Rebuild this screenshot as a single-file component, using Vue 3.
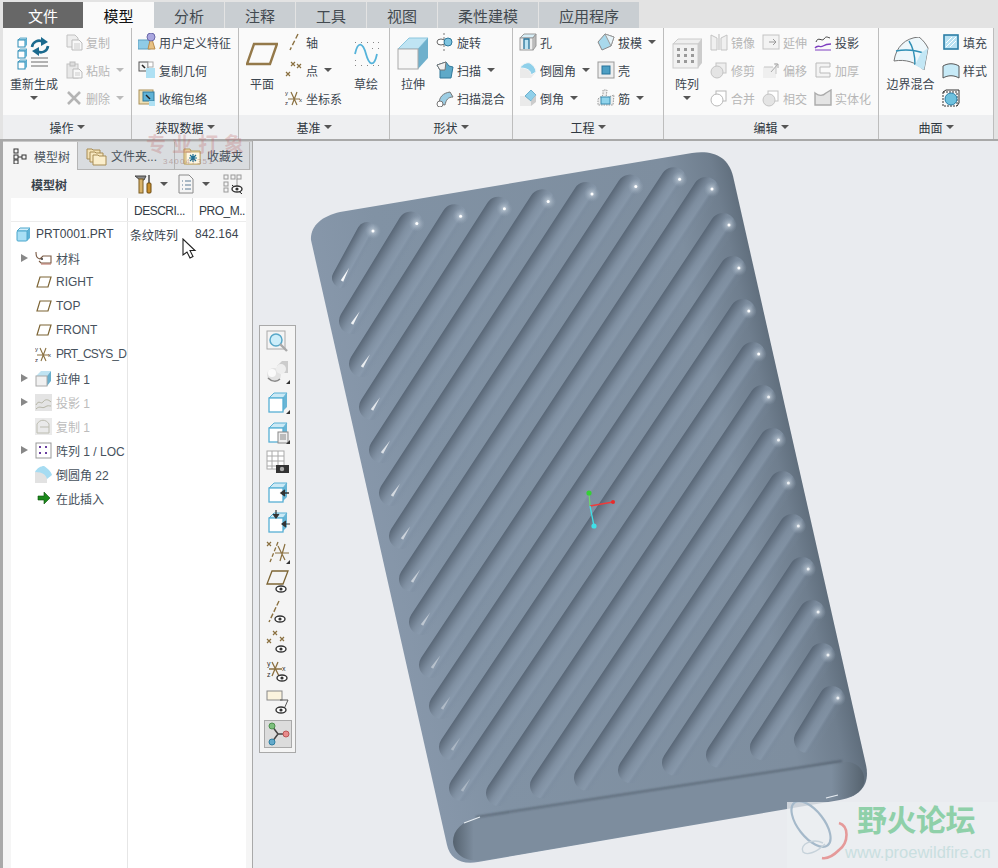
<script setup>
import { h } from 'vue'

// little shared pieces for the icons
const miniCube = (x, y) =>
  `<polygon points="${x},${y + 2} ${x + 2},${y} ${x + 9},${y} ${x + 7},${y + 2}" fill="#bfe3f2" stroke="#2d8cb5" stroke-width=".7"/><rect x="${x}" y="${y + 2}" width="7" height="7" fill="#fff" stroke="#2d8cb5"/><polygon points="${x + 7},${y + 2} ${x + 9},${y} ${x + 9},${y + 7} ${x + 7},${y + 9}" fill="#5fb0d2"/>`
const bigCube = `<polygon points="1,12 12,1 31,1 21,12" fill="#bfe4f3" stroke="#8cc6de"/><polygon points="21,12 31,1 31,21 21,32" fill="#6fb0cc"/><rect x="1" y="12" width="20" height="20" fill="#f6f6f6" stroke="#a9a9a9"/>`
const eye = (x, y) =>
  `<ellipse cx="${x}" cy="${y}" rx="5" ry="3" fill="#fff" stroke="#333" stroke-width="1.4"/><circle cx="${x}" cy="${y}" r="1.6" fill="#333"/>`
const xm = (x, y, c = '#8a7040') =>
  `<path d="M${x - 2} ${y - 2}l4 4m0-4l-4 4" stroke="${c}" stroke-width="1.2" fill="none"/>`
const tbCube = `<polygon points="3,8 8,3 21,3 17,8" fill="#cbe9f5" stroke="#58b0d5"/><polygon points="17,8 21,3 21,17 17,21" fill="#69b5d5"/><rect x="3" y="8" width="14" height="14" fill="#fff" stroke="#58b0d5" stroke-width="1.3"/>`
const corner = `<polygon points="24,20 24,24 20,24" fill="#333"/>`
const csys = c =>
  `<path d="M12 2L6 16M6 2l7 14M3 9h13" stroke="${c}" stroke-width="1.3" fill="none"/>`

const icons = {
  regen: [34, 34, miniCube(1, 1) + miniCube(1, 12) + miniCube(1, 23) +
    `<path d="M15 10a7 7 0 0 1 11-5" stroke="#1b6a8e" stroke-width="2.6" fill="none"/><polygon points="24,0 31,5 24,9" fill="#1b6a8e"/><path d="M31 9a7 7 0 0 1-11 5" stroke="#1b6a8e" stroke-width="2.6" fill="none"/><polygon points="22,10 15,14 22,19" fill="#1b6a8e"/><path d="M14 21h17M14 25h17M14 29h17" stroke="#9a9a9a" stroke-width="1.4"/>`],
  copy: [18, 18, `<path d="M2 2h8l3 3v9H2z" fill="#eee" stroke="#c2c2c2"/><path d="M7 7h7l3 3v7H7z" fill="#f8f8f8" stroke="#bbb"/><path d="M9 11h6M9 13h6M9 15h6" stroke="#ccc"/>`],
  paste: [18, 18, `<rect x="2" y="3" width="11" height="14" fill="#e8e8e8" stroke="#c2c2c2"/><rect x="5" y="1" width="5" height="4" fill="#ddd" stroke="#bbb"/><path d="M8 8h6l3 3v6H8z" fill="#f8f8f8" stroke="#bbb"/><path d="M10 12h5M10 14h5" stroke="#ccc"/>`],
  del: [18, 18, `<path d="M3 3l12 12M15 3L3 15" stroke="#b4b4b4" stroke-width="2.6"/>`],
  udf: [18, 18, `<rect x="0" y="7" width="12" height="9" fill="#8fcbe6" stroke="#5d9fc0"/><polygon points="10,16 13,3 17,16" fill="#e8c184" stroke="#b98c4c"/><circle cx="13" cy="4" r="4" fill="#a9a6df" stroke="#6a68a8"/>`],
  geom: [18, 18, `<rect x="1" y="1" width="9" height="9" fill="#f4f4f4" stroke="#555"/><path d="M4 4l3 3" stroke="#222" stroke-width="1.6"/><rect x="8" y="7" width="9" height="10" fill="#aee0f3"/><rect x="10" y="1" width="5" height="5" fill="#fff" stroke="#aaa"/>`],
  shrink: [18, 18, `<rect x="1" y="1" width="14" height="14" fill="#efe0b5" stroke="#a98f58"/><rect x="5" y="3" width="11" height="9" fill="#5fb2d6" stroke="#31799b"/><path d="M8 6l4 4" stroke="#222" stroke-width="1.4"/><rect x="11" y="12" width="6" height="5" fill="#aee0f3"/>`],
  plane: [32, 24, `<polygon points="8,2 31,2 24,22 1,22" fill="none" stroke="#94794a" stroke-width="2.4"/>`],
  axis: [18, 18, `<path d="M13 1L5 17" stroke="#8a7040" stroke-width="1.4" stroke-dasharray="5 2.5" fill="none"/>`],
  point: [18, 18, xm(8, 3) + xm(14, 5) + xm(3, 13)],
  csys: [18, 18, `<path d="M12 3L7 16M6 3l6 13M3 10h12" stroke="#8a7040" stroke-width="1.2" fill="none"/><text x="0" y="6" font-size="6" fill="#333">y</text><text x="0" y="16" font-size="6" fill="#333">z</text><text x="14" y="13" font-size="6" fill="#333">x</text>`],
  sketch: [28, 26, `<path d="M3 13c3-14 8-11 11 0s8 14 11 0" fill="none" stroke="#55b3da" stroke-width="1.8"/><g fill="#888"><rect x="3" y="1" width="1" height="1"/><rect x="9" y="1" width="1" height="1"/><rect x="15" y="1" width="1" height="1"/><rect x="21" y="1" width="1" height="1"/><rect x="26" y="1" width="1" height="1"/><rect x="26" y="7" width="1" height="1"/><rect x="20" y="7" width="1" height="1"/><rect x="3" y="19" width="1" height="1"/><rect x="3" y="24" width="1" height="1"/><rect x="9" y="24" width="1" height="1"/><rect x="15" y="24" width="1" height="1"/><rect x="21" y="24" width="1" height="1"/><rect x="26" y="24" width="1" height="1"/></g>`],
  extrude: [32, 33, bigCube],
  revolve: [18, 18, `<path d="M8 0v18" stroke="#777" stroke-dasharray="2 2"/><ellipse cx="5" cy="9" rx="4" ry="3" fill="#fff" stroke="#666"/><circle cx="12" cy="9" r="4" fill="#7ec4e0" stroke="#31799b"/>`],
  sweep: [18, 18, `<polygon points="1,4 10,1 13,5 17,6 15,17 4,17 4,9" fill="#5ea9c8" stroke="#31799b"/><polygon points="1,4 10,1 9,9 4,9" fill="#f2f2f2" stroke="#777"/>`],
  sweepblend: [18, 18, `<path d="M3 15c0-7 4-11 11-12l3 5c-5 0-7 3-8 8z" fill="#9ccde3" stroke="#777"/><circle cx="4" cy="15" r="3" fill="#fff" stroke="#777"/>`],
  hole: [18, 18, `<polygon points="1,5 5,1 17,1 14,5" fill="#d7eef7" stroke="#999"/><rect x="1" y="5" width="13" height="12" fill="#eee" stroke="#999"/><path d="M14 5l3-4v12l-3 4" fill="#bbb" stroke="#999"/><path d="M5 16V6h5v10" fill="#bfe4f3" stroke="#27739a" stroke-width="1.3"/>`],
  round: [18, 18, `<path d="M1 7h8c1-3 2-5 2-5s5 3 6 9l-5 6H1z" fill="#eaeaea"/><path d="M1 7c2-4 7-6 10-5 3 2 6 5 6 9l-5 3c0-4-3-7-11-7z" fill="#8fd0ea" stroke="#f6f6f6"/>`],
  chamfer: [18, 18, `<rect x="1" y="7" width="11" height="10" fill="#eaeaea"/><polygon points="12,1 17,6 12,12 6,7" fill="#8fd0ea" stroke="#6fb0cc"/><polygon points="12,12 17,6 17,13 12,17" fill="#ccc"/>`],
  draft: [18, 18, `<polygon points="1,9 8,1 17,4 14,13 5,17" fill="#a9d9ec" stroke="#888"/><polygon points="8,1 14,13 17,4" fill="#e6f3f8" stroke="#999"/>`],
  shell: [18, 18, `<rect x="1" y="1" width="16" height="16" fill="#eee" stroke="#999"/><rect x="5" y="5" width="8" height="8" fill="#4d9fc4" stroke="#27739a"/>`],
  rib: [18, 18, `<path d="M1 10l5-4v-5l4 0-1 8 8-3-1 10H1z" fill="#eee" stroke="#999" stroke-dasharray="1.5 1"/><rect x="4" y="8" width="9" height="7" fill="#90d4ec" stroke="#3a8cb0"/>`],
  pattern: [30, 31, `<polygon points="1,6 6,1 30,1 26,6" fill="#eee" stroke="#ccc"/><polygon points="26,6 30,1 30,25 26,30" fill="#ccc"/><rect x="1" y="6" width="25" height="24" fill="#f1f1f1" stroke="#ccc"/><g fill="#9a9a9a"><rect x="5" y="10" width="3" height="3"/><rect x="12" y="10" width="3" height="3"/><rect x="19" y="10" width="3" height="3"/><rect x="5" y="16" width="3" height="3"/><rect x="12" y="16" width="3" height="3"/><rect x="19" y="16" width="3" height="3"/><rect x="5" y="22" width="3" height="3"/><rect x="12" y="22" width="3" height="3"/><rect x="19" y="22" width="3" height="3"/></g>`],
  mirror: [18, 18, `<path d="M1 2l6 3v12H1zM17 2l-6 3v12h6z" fill="#f0f0f0" stroke="#c4c4c4"/><path d="M9 1v16" stroke="#bbb"/>`],
  trim: [18, 18, `<rect x="6" y="2" width="10" height="10" fill="#eee" stroke="#c4c4c4"/><circle cx="7" cy="11" r="6" fill="#e4e4e4" stroke="#c4c4c4"/>`],
  merge: [18, 18, `<rect x="6" y="2" width="10" height="10" fill="#fff" stroke="#b8b8b8"/><circle cx="7" cy="11" r="6" fill="#fff" stroke="#b8b8b8"/>`],
  extend: [18, 18, `<rect x="1" y="2" width="16" height="14" fill="#f3f3f3" stroke="#c4c4c4"/><path d="M7 9h7M11 6l3 3-3 3" stroke="#999" fill="none"/>`],
  offset: [18, 18, `<rect x="1" y="6" width="13" height="11" fill="#efefef"/><path d="M2 6h9M14 2v11" stroke="#c4c4c4"/><path d="M9 11l7-8M12 3h4v4" stroke="#aaa" fill="none"/>`],
  intersect: [18, 18, `<rect x="6" y="2" width="10" height="10" fill="#fff" stroke="#c4c4c4"/><circle cx="7" cy="11" r="6" fill="#e4e4e4" stroke="#c4c4c4"/>`],
  project: [18, 18, `<path d="M2 9c2-6 6 0 8-3s3-2 6-1" fill="none" stroke="#444"/><path d="M1 15c3-4 5 0 8-2s4-2 8-2" fill="none" stroke="#7e3ec0" stroke-width="1.3"/><path d="M1 17h16" stroke="#7e3ec0"/>`],
  thicken: [18, 18, `<path d="M2 2h14v4H6v6h10v4H2z" fill="#f3f3f3" stroke="#bbb"/>`],
  solidify: [18, 18, `<path d="M1 4c4 3 8 3 11 0l5-3v15H1z" fill="#e4e4e4" stroke="#aaa" stroke-width="1.4"/>`],
  boundary: [36, 33, `<path d="M1 24C3 10 12 1 26 0c4 3 7 7 9 11l-4 22c-9-8-18-11-30-9z" fill="#eef7fb" stroke="#777"/><path d="M16 4c4 6 6 14 6 24M3 14c10-2 20-1 30 3" stroke="#2e8fb5" stroke-width="1.4" fill="none"/><path d="M22 28l9 5 4-22-7 5z" fill="#c3e7f5"/>`],
  fill: [18, 18, `<rect x="2" y="2" width="14" height="14" fill="#b9e2f3" stroke="#2b7ea6" stroke-width="1.6"/><path d="M4 14l10-10M8 14l6-6M4 10l6-6" stroke="#fff"/>`],
  style: [18, 18, `<path d="M1 5c5-3 11-3 16 0v12c-5-3-11-3-16 0z" fill="#c7eaf7" stroke="#555"/>`],
  freestyle: [18, 18, `<rect x="1" y="3" width="14" height="14" fill="none" stroke="#333" stroke-dasharray="2 1"/><path d="M1 3l3-2h13v13l-2 3" fill="none" stroke="#333"/><circle cx="9" cy="10" r="6" fill="#6ec1de" stroke="#2b7ea6"/>`],
  tree: [16, 16, `<rect x="1" y="1" width="4" height="4" fill="none" stroke="#333"/><rect x="1" y="7" width="4" height="4" fill="none" stroke="#333"/><rect x="1" y="12" width="4" height="4" fill="none" stroke="#333"/><rect x="9" y="7" width="4" height="4" fill="none" stroke="#333"/><path d="M5 9h4" stroke="#333"/>`],
  folders: [22, 20, `<path d="M1 3h5l1 1h7v9H1z" fill="#f3e1b3" stroke="#a78c55"/><path d="M4 6h5l1 1h7v9H4z" fill="#f7e7bf" stroke="#a78c55"/><path d="M7 9h5l1 1h7v9H7z" fill="#fbeecb" stroke="#a78c55"/>`],
  fav: [18, 18, `<path d="M1 2h6l1 2h9v13H1z" fill="#f5dfa6" stroke="#b49a5c"/><rect x="3" y="5" width="14" height="12" fill="#fff8e4" stroke="#c9b37c"/><path d="M10 7v8M6 11h8M7 8l6 6m0-6l-6 6" stroke="#1f6f94" stroke-width="1.2"/>`],
  tools: [19, 20, `<path d="M1 2h11l-2 4H6z" fill="#888" stroke="#444"/><rect x="5" y="5" width="4" height="14" fill="#d9b36a" stroke="#7b5c22"/><rect x="14" y="1" width="2" height="8" fill="#777"/><rect x="13" y="9" width="4" height="10" rx="1" fill="#c98f2c" stroke="#6d4a10"/>`],
  list: [16, 20, `<path d="M1 1h10l4 4v14H1z" fill="#f5f5f5" stroke="#8a8a8a"/><path d="M4 7h1M7 7h6M4 11h1M7 11h6M4 15h1M7 15h6" stroke="#5a7a94"/>`],
  treeEye: [20, 20, `<g fill="none" stroke="#999"><rect x="1" y="1" width="4" height="4"/><rect x="1" y="8" width="4" height="4"/><rect x="1" y="14" width="4" height="4"/><rect x="8" y="1" width="4" height="4"/><rect x="14" y="1" width="4" height="4"/><path d="M14 5v8"/></g><path d="M9 11l10 9" stroke="#222"/>` + eye(14, 15)],
  material: [17, 14, `<path d="M1 1c0 5 1 6 4 7l3-3h8v7H6l-2-2" fill="none" stroke="#7a5a44" stroke-width="1.1"/><circle cx="7" cy="8" r="1" fill="#333"/><path d="M6 13h10" stroke="#b56a5c"/>`],
  planeSm: [16, 12, `<polygon points="4,1 15,1 12,11 1,11" fill="none" stroke="#7d6535" stroke-width="1.2"/>`],
  csysSm: [17, 17, `<path d="M11 2L6 15M5 2l6 13M2 9h12" stroke="#8a7040" stroke-width="1.1" fill="none"/><text x="0" y="5" font-size="6" fill="#333">y</text><text x="0" y="16" font-size="6" fill="#333">z</text><text x="13" y="11" font-size="6" fill="#333">x</text>`],
  solid: [17, 17, `<polygon points="1,6 6,1 16,1 12,6" fill="#bfe3f2"/><polygon points="12,6 16,1 16,11 12,16" fill="#6aafcc"/><rect x="1" y="6" width="11" height="10" fill="#f1f1f1" stroke="#aaa"/>`],
  solidRoot: [15, 15, `<polygon points="1,4 4,1 14,1 11,4" fill="#d5effa" stroke="#4aa6cc"/><polygon points="11,4 14,1 14,11 11,14" fill="#5fb2d6"/><rect x="1" y="4" width="10" height="10" rx="1" fill="#a9dff5" stroke="#4aa6cc"/>`],
  ghostProject: [17, 17, `<rect x="0" y="0" width="17" height="17" fill="#e4e4e4"/><path d="M1 11c3-6 5 0 7-3s5-3 8 0M1 15c4-4 6 0 9-2s4-1 6-1" fill="none" stroke="#b5b5a5"/>`],
  ghostCopy: [17, 17, `<rect x="0" y="0" width="17" height="17" fill="#eaeaea"/><path d="M2 15V6c3-5 9-5 12 0v9zM5 9h9" fill="none" stroke="#bcbcb0"/>`],
  patternSm: [17, 17, `<rect x="1" y="1" width="15" height="15" fill="#fff" stroke="#999"/><g fill="#6a3fa0"><rect x="4" y="4" width="2" height="2"/><rect x="10" y="4" width="2" height="2"/><rect x="4" y="10" width="2" height="2"/><rect x="10" y="10" width="2" height="2"/></g>`],
  roundSm: [17, 17, `<rect x="0" y="6" width="12" height="11" fill="#e2e2e2"/><path d="M0 6c2-4 6-6 9-6 3 2 7 5 8 9l-5 4c-1-4-4-7-12-7z" fill="#a6dcf2"/>`],
  insert: [14, 12, `<polygon points="1,4 7,4 7,0 13,6 7,12 7,8 1,8" fill="#1c8a1c" stroke="#0b4f0b" stroke-width=".6"/>`],
  // floating toolbar
  tZoom: [24, 24, `<rect x="1" y="1" width="18" height="18" fill="#f4f4f4" stroke="#aaa"/><circle cx="10" cy="10" r="6" fill="#cdeefa" stroke="#58a8c9" stroke-width="1.5"/><path d="M14 14l7 7" stroke="#aaa" stroke-width="2.4"/>`],
  tShade: [24, 24, `<polygon points="11,6 16,1 22,1 22,13 16,13" fill="#ccc"/><circle cx="8" cy="15" r="7" fill="#e2e2e2"/><circle cx="6" cy="13" r="4" fill="#fafafa"/><circle cx="15" cy="9" r="5" fill="#eee"/><path d="M2 18c4 4 9 4 12 1" stroke="#888" stroke-width="1.5" fill="none"/>` + corner],
  tCube: [24, 24, tbCube + corner],
  tCubeList: [24, 24, tbCube + `<rect x="12" y="12" width="10" height="11" fill="#eee" stroke="#888"/><path d="M14 15h6M14 17h6M14 19h6" stroke="#888"/>` + corner],
  tCamera: [24, 24, `<rect x="1" y="1" width="17" height="18" fill="#fff" stroke="#aaa"/><path d="M1 6h17M1 11h17M1 16h17M6 1v18M12 1v18" stroke="#aaa"/><rect x="10" y="15" width="13" height="8" fill="#333"/><circle cx="16" cy="19" r="2.2" fill="#aaa"/>`],
  tCubeL: [24, 24, tbCube + `<path d="M23 13h-7M19 10l-4 3 4 3" stroke="#333" stroke-width="1.5" fill="#333"/>`],
  tCubeTL: [24, 24, tbCube + `<path d="M10 0v6M7 4l3 4 3-4" stroke="#333" stroke-width="1.2" fill="#333"/><path d="M24 14h-6M20 11l-4 3 4 3" stroke="#333" stroke-width="1.2" fill="#333"/>`],
  tDatum: [24, 24, xm(3, 4) + `<path d="M12 2L4 22" stroke="#8a7040" stroke-width="1.3" stroke-dasharray="4 2"/><path d="M19 4l-5 17M12 6l7 14M9 13h14" stroke="#8a7040" stroke-width="1.2" fill="none"/>` + corner],
  tPlane: [24, 24, `<polygon points="6,1 22,1 17,14 1,14" fill="none" stroke="#7d6535" stroke-width="1.3"/>` + eye(15, 19)],
  tAxis: [24, 24, `<path d="M13 1L3 22" stroke="#8a7040" stroke-width="1.4" stroke-dasharray="5 2"/>` + eye(14, 19)],
  tPoint: [24, 24, xm(9, 3) + xm(16, 9) + xm(3, 11) + eye(15, 19)],
  tCsys: [24, 24, csys('#8a7040') + `<text x="1" y="6" font-size="7" fill="#333">y</text><text x="1" y="17" font-size="7" fill="#333">z</text><text x="16" y="11" font-size="7" fill="#333">x</text>` + eye(16, 18)],
  tNote: [24, 24, `<rect x="1" y="1" width="15" height="9" fill="#fbf3de" stroke="#888"/><path d="M14 10h8l-4 9" fill="none" stroke="#555"/>` + eye(15, 20)],
  tTriad: [24, 24, `<path d="M12 12L6 4M12 12L6 20M12 12h8" stroke="#444" stroke-width="1.5"/><circle cx="6" cy="4" r="3" fill="#7cbf7c" stroke="#4d8f4d"/><circle cx="6" cy="20" r="3" fill="#64aacb" stroke="#2e7ea1"/><circle cx="20" cy="12" r="3" fill="#e88b8b" stroke="#bb5555"/>`],
}

// renders one of the icons above
const Icon = props => {
  const [w, h2, svg] = icons[props.name]
  return h('svg', { width: w, height: h2, viewBox: `0 0 ${w} ${h2}`, innerHTML: svg })
}

const tabs = ['分析', '注释', '工具', '视图', '柔性建模', '应用程序']

const it = (icon, text, extra = {}) => ({ icon, text, ...extra })
const off = { dis: true }

const groups = [
  { label: '操作', w: 129, cols: [
    { large: true, w: 62, icon: 'regen', text: '重新生成', caret: true },
    { w: 65, items: [it('copy', '复制', off), it('paste', '粘贴', { dis: true, caret: true }), it('del', '删除', { dis: true, caret: true })] },
  ] },
  { label: '获取数据', w: 107, pad: 6, cols: [
    { w: 95, items: [it('udf', '用户定义特征'), it('geom', '复制几何'), it('shrink', '收缩包络')] },
  ] },
  { label: '基准', w: 151, cols: [
    { large: true, w: 46, icon: 'plane', text: '平面' },
    { w: 62, items: [it('axis', '轴'), it('point', '点', { caret: true }), it('csys', '坐标系')] },
    { large: true, w: 38, icon: 'sketch', text: '草绘' },
  ] },
  { label: '形状', w: 123, cols: [
    { large: true, w: 46, icon: 'extrude', text: '拉伸' },
    { w: 74, items: [it('revolve', '旋转'), it('sweep', '扫描', { caret: true }), it('sweepblend', '扫描混合')] },
  ] },
  { label: '工程', w: 151, pad: 6, cols: [
    { w: 78, items: [it('hole', '孔'), it('round', '倒圆角', { caret: true }), it('chamfer', '倒角', { caret: true })] },
    { w: 64, items: [it('draft', '拔模', { caret: true }), it('shell', '壳'), it('rib', '筋', { caret: true })] },
  ] },
  { label: '编辑', w: 215, cols: [
    { large: true, w: 46, icon: 'pattern', text: '阵列', caret: true },
    { w: 52, items: [it('mirror', '镜像', off), it('trim', '修剪', off), it('merge', '合并', off)] },
    { w: 52, items: [it('extend', '延伸', off), it('offset', '偏移', off), it('intersect', '相交', off)] },
    { w: 60, items: [it('project', '投影'), it('thicken', '加厚', off), it('solidify', '实体化', off)] },
  ] },
  { label: '曲面', w: 115, cols: [
    { large: true, w: 63, icon: 'boundary', text: '边界混合' },
    { w: 48, items: [it('fill', '填充'), it('style', '样式'), it('freestyle', '')] },
  ] },
]

const treeRows = [
  { icon: 'material', text: '材料', arrow: true },
  { icon: 'planeSm', text: 'RIGHT' },
  { icon: 'planeSm', text: 'TOP' },
  { icon: 'planeSm', text: 'FRONT' },
  { icon: 'csysSm', text: 'PRT_CSYS_D', tight: true },
  { icon: 'solid', text: '拉伸 1', arrow: true },
  { icon: 'ghostProject', text: '投影 1', arrow: true, dis: true },
  { icon: 'ghostCopy', text: '复制 1', dis: true },
  { icon: 'patternSm', text: '阵列 1 / LOC', arrow: true },
  { icon: 'roundSm', text: '倒圆角 22' },
  { icon: 'insert', text: '在此插入' },
]

const toolbar = ['tZoom', 'tShade', 'tCube', 'tCubeList', 'tCamera', 'tCubeL', 'tCubeTL', 'tDatum', 'tPlane', 'tAxis', 'tPoint', 'tCsys', 'tNote']

// the ribs: 13 start on the left edge, 8 on the bottom; 8 end on the top edge, 13 on the right
const lowers = []
for (let k = 0; k < 13; k++) lowers.push([342 + 10 * k, 278 + 43 * k - (k > 9 ? (k - 9) * 2 : 0)])
for (let k = 0; k < 8; k++) lowers.push([499 + 44 * k, 793 - 7.6 * k])
const uppers = []
for (let k = 0; k < 8; k++) uppers.push([373 + 43.8 * k, 231 - 7.4 * k])
uppers.push([712, 189])
for (let k = 0; k < 12; k++) uppers.push([729 + 9.9 * k, 225 + 43 * k])

const ribs = lowers.map(([x1, y1], i) => {
  const [ux, uy] = uppers[i]
  const x2 = ux - 6
  const y2 = uy + 1
  const len = Math.hypot(x2 - x1, y2 - y1)
  const dx = (x2 - x1) / len
  const dy = (y2 - y1) / len
  const r = i === 0 ? 10 : 13
  // tapered highlight near the lower end, only on the left side ones
  const sx = x1
  const sy = y1 + 3
  const streak = i < 13
    ? `${sx - 1.2},${sy - 0.8} ${sx + 1.2},${sy + 0.8} ${sx + dx * 15},${sy + dy * 15}`
    : null
  return {
    id: i,
    dot: [ux, uy],
    // rib drawn as a rounded bar, rotated about its lower end
    tf: `translate(${x1} ${y1}) rotate(${(Math.atan2(dy, dx) * 180) / Math.PI})`,
    len: len + 2 * r,
    r,
    streak,
    op: i < 13 ? Math.max(0.3, 0.95 - i * 0.06) : 0,
    dim: i > 12 ? 0.75 : 1,
  }
})
</script>

<template>
  <div class="app">
    <!-- Ribbon -->
    <header class="ribbon">
      <nav class="tabs">
        <span class="tab tab-file">文件</span>
        <span class="tab tab-active">模型</span>
        <span v-for="t in tabs" :key="t" class="tab" :class="{ wide: t.length > 2 }">{{ t }}</span>
      </nav>
      <div class="groups">
        <section v-for="g in groups" :key="g.label" class="group" :style="{ width: g.w + 'px' }">
          <div class="group-body" :style="{ paddingLeft: (g.pad || 0) + 'px' }">
            <template v-for="(c, i) in g.cols" :key="i">
              <div v-if="c.large" class="large" :style="{ width: c.w + 'px' }">
                <div class="large-icon"><Icon :name="c.icon" /></div>
                <span class="large-text">{{ c.text }}</span>
                <i v-if="c.caret" class="caret" />
              </div>
              <div v-else class="col" :style="{ width: c.w + 'px' }">
                <div v-for="item in c.items" :key="item.icon" class="small" :class="{ dis: item.dis }">
                  <span class="small-icon"><Icon :name="item.icon" /></span>
                  <span v-if="item.text">{{ item.text }}</span>
                  <i v-if="item.caret" class="caret small-caret" />
                </div>
              </div>
            </template>
          </div>
          <footer class="group-foot">{{ g.label }}<i class="caret foot-caret" /></footer>
        </section>
      </div>
    </header>

    <div class="main">
      <!-- Model tree panel -->
      <aside class="panel">
        <div class="panel-tabs">
          <div class="ptab ptab-on"><Icon name="tree" /><span>模型树</span></div>
          <div class="ptab ptab-folder"><Icon name="folders" /><span>文件夹...</span></div>
          <div class="ptab ptab-fav"><Icon name="fav" /><span>收藏夹</span></div>
        </div>
        <div class="panel-tools">
          <b class="tools-title">模型树</b>
          <span class="tool-hammer"><Icon name="tools" /></span><i class="caret tool-caret" />
          <span class="tool-list"><Icon name="list" /></span><i class="caret tool-caret" />
          <span class="tool-eye"><Icon name="treeEye" /></span>
        </div>
        <div class="table">
          <div class="thead">
            <div class="c-tree" />
            <div class="c-desc">DESCRI...</div>
            <div class="c-pro">PRO_M..</div>
          </div>
          <div class="tbody">
            <div class="tree-col">
              <div class="row root"><Icon name="solidRoot" /><span>PRT0001.PRT</span></div>
              <div v-for="r in treeRows" :key="r.text" class="row" :class="{ dis: r.dis }">
                <i class="arrow" :class="{ hidden: !r.arrow }" />
                <span class="row-icon"><Icon :name="r.icon" /></span>
                <span class="row-text" :class="{ tight: r.tight }">{{ r.text }}</span>
              </div>
            </div>
            <div class="data-col">
              <div class="data-row">
                <span class="d-desc">条纹阵列</span>
                <span class="d-pro">842.164</span>
              </div>
            </div>
          </div>
        </div>
      </aside>

      <!-- Graphics area -->
      <main class="canvas">
        <svg class="part" width="745" height="727" viewBox="253 141 745 727">
          <defs>
            <linearGradient id="bodyFill" gradientUnits="userSpaceOnUse" x1="320" y1="400" x2="770" y2="300">
              <stop offset="0" stop-color="#75859a" />
              <stop offset=".05" stop-color="#8797aa" />
              <stop offset=".2" stop-color="#8192a4" />
              <stop offset=".84" stop-color="#7e8e9f" />
              <stop offset=".94" stop-color="#6f7e8e" />
              <stop offset="1" stop-color="#5a6876" />
            </linearGradient>
            <linearGradient id="ribFill" x1="0" y1="0" x2="0" y2="1">
              <stop offset="0" stop-color="#566474" stop-opacity=".95" />
              <stop offset=".1" stop-color="#5f6d7d" stop-opacity=".9" />
              <stop offset=".4" stop-color="#7d8d9f" stop-opacity=".85" />
              <stop offset=".66" stop-color="#8c9db0" stop-opacity=".55" />
              <stop offset=".78" stop-color="#74859a" stop-opacity=".2" />
              <stop offset="1" stop-color="#8293a5" stop-opacity="0" />
            </linearGradient>
            <linearGradient id="slotFill" x1="0" y1="0" x2="1" y2="0">
              <stop offset="0" stop-color="#55626f" />
              <stop offset=".05" stop-color="#7d8d9e" />
              <stop offset=".92" stop-color="#7d8d9e" />
              <stop offset="1" stop-color="#56636f" />
            </linearGradient>
            <radialGradient id="halo">
              <stop offset="0" stop-color="#dde6ee" stop-opacity=".7" />
              <stop offset="1" stop-color="#9fb0c2" stop-opacity="0" />
            </radialGradient>
            <filter id="soft"><feGaussianBlur stdDeviation=".5" /></filter>
            <filter id="soft2"><feGaussianBlur stdDeviation=".8" /></filter>
          </defs>

          <path class="body" d="M311 240C310 226 322 216 340 212L692 153C714 150 728 157 733 176L866 765C870 783 862 796 840 800L478 862C460 865 450 858 447 845Z" fill="url(#bodyFill)" />

          <g v-for="r in ribs" :key="r.id">
            <rect :transform="r.tf" :x="-r.r" :y="-r.r" :width="r.len" :height="r.r * 2" :rx="r.r" fill="url(#ribFill)" />
            <circle :cx="r.dot[0]" :cy="r.dot[1]" r="8" fill="url(#halo)" />
            <circle :cx="r.dot[0]" :cy="r.dot[1]" r="1.5" fill="#fff" :opacity="r.dim" />
            <polygon v-if="r.streak" :points="r.streak" fill="#fff" :opacity="r.op" filter="url(#soft)" />
          </g>

          <!-- end face of the part -->
          <path d="M478 818L842 762C858 760 866 772 864 783C862 793 852 797 840 799L486 860C468 863 454 856 453 842C453 830 462 821 478 818Z" fill="url(#slotFill)" />
          <path d="M476 817L842 761" stroke="#4f5c69" stroke-width="1.6" fill="none" filter="url(#soft2)" />
          <path d="M464 823L480 817M826 798L838 795" stroke="#e8eef3" stroke-width="1.2" fill="none" filter="url(#soft)" />

          <!-- coordinate triad -->
          <line x1="590" y1="506" x2="589" y2="493" stroke="#6fd36f" stroke-width="1.3" />
          <line x1="590" y1="506" x2="613" y2="502" stroke="#f03a3a" stroke-width="1.3" />
          <line x1="590" y1="506" x2="594" y2="526" stroke="#3fe0e8" stroke-width="1.3" />
          <circle cx="589" cy="493" r="2.6" fill="#35d035" />
          <circle cx="613" cy="502" r="2" fill="#e82a2a" />
          <circle cx="594" cy="526" r="2.6" fill="#3fe0e8" />
        </svg>

        <div class="float-bar">
          <span v-for="t in toolbar" :key="t" class="float-btn"><Icon :name="t" /></span>
          <span class="float-btn float-on"><Icon name="tTriad" /></span>
        </div>

        <!-- forum watermark -->
        <div class="forum">
          <svg class="forum-logo" width="66" height="66" viewBox="0 0 66 66">
            <ellipse cx="22" cy="22" rx="13" ry="27" transform="rotate(-38 22 22)" fill="none" stroke="#a5b9ca" stroke-width="2.2" />
            <path d="M50 21C60 24 60 40 50 48C44 54 38 57 33 56" fill="none" stroke="#e59a9a" stroke-width="2.6" />
            <path d="M34 41C24 36 10 42 14 50C18 54 28 50 36 42" fill="none" stroke="#c6d2da" stroke-width="1.4" />
          </svg>
          <div class="forum-name">野火论坛</div>
          <div class="forum-url">www.proewildfire.cn</div>
        </div>
      </main>
    </div>

    <!-- overlays on top of the window -->
    <div class="stamp">专业打象<small>340047351</small></div>
    <svg class="cursor" width="15" height="21" viewBox="0 0 15 21">
      <path d="M1 1v16l4-3 3 6 3-1.5-3-6h5z" fill="#fff" stroke="#222" stroke-width="1.1" />
    </svg>
  </div>
</template>

<style scoped>
.app {
  position: relative;
  width: 998px;
  height: 868px;
  overflow: hidden;
  display: flex;
  flex-direction: column;
  background: #e9ebef;
  font-family: "Liberation Sans", "Noto Sans CJK SC", sans-serif;
  font-size: 12px;
  color: #3c4650;
}

/* ── Ribbon ─────────────────────────────────────── */
.ribbon {
  flex-shrink: 0;
  height: 141px;
  background: #e3e3e3;
  border-bottom: 2px solid #a8a8a8;
  box-sizing: border-box;
}
.tabs {
  display: flex;
  height: 28px;
  padding: 2px 0 0 3px;
  box-sizing: border-box;
  gap: 1px;
}
.tab {
  width: 70px;
  display: flex;
  align-items: center;
  justify-content: center;
  background: #c9ced2;
  font-size: 15px;
  color: #434a50;
}
.tab.wide { width: 100px; }
.tab-file {
  width: 80px;
  margin-right: -1px;
  background: #676767;
  color: #fff;
}
.tab-active {
  width: 71px;
  margin-right: -1px;
  background: #fafafa;
  color: #111;
}

.groups {
  display: flex;
  height: 111px;
  padding-left: 3px;
}
.group {
  box-sizing: border-box;
  display: flex;
  flex-direction: column;
  background: #fafafa;
  border-right: 1px solid #bdbdbd;
  flex-shrink: 0;
}
.group-body {
  flex: 1;
  display: flex;
}
.group-foot {
  height: 24px;
  background: #eeeff1;
  display: flex;
  align-items: center;
  justify-content: center;
  color: #2e3740;
}
.large {
  flex-shrink: 0;
  display: flex;
  flex-direction: column;
  align-items: center;
}
.large-icon {
  height: 49px;
  display: flex;
  align-items: center;
  justify-content: center;
  padding-top: 2px;
  box-sizing: border-box;
}
.large-text {
  line-height: 17px;
  white-space: nowrap;
}
.col { flex-shrink: 0; }
.small {
  height: 28px;
  display: flex;
  align-items: center;
  white-space: nowrap;
}
.small.dis { color: #b6b6b6; }
.small-icon {
  width: 18px;
  height: 18px;
  margin-right: 3px;
  flex-shrink: 0;
  display: flex;
}
.caret {
  display: inline-block;
  width: 0;
  height: 0;
  border-left: 4px solid transparent;
  border-right: 4px solid transparent;
  border-top: 4px solid #555;
}
.large .caret { margin-top: 2px; }
.small-caret { margin-left: 6px; }
.small.dis .caret { border-top-color: #bbb; }
.foot-caret { margin-left: 3px; }

/* ── Main area ──────────────────────────────────── */
.main {
  flex: 1;
  display: flex;
  min-height: 0;
}
.panel {
  width: 253px;
  flex-shrink: 0;
  box-sizing: border-box;
  display: flex;
  flex-direction: column;
  background: #f5f5f5;
  border-left: 3px solid #a9a9a9;
  border-right: 1px solid #a9a9a9;
}
.panel-tabs {
  display: flex;
  height: 29px;
  background: #d9dcdf;
  border-top: 1px solid #c8c8c8;
  box-sizing: border-box;
}
.ptab {
  display: flex;
  align-items: center;
  box-sizing: border-box;
  border-bottom: 1px solid #b5b5b5;
  border-right: 1px solid #b5b5b5;
  color: #4a535c;
  white-space: nowrap;
}
.ptab-on {
  width: 75px;
  padding-left: 10px;
  gap: 5px;
  background: #f5f5f5;
  border-bottom: 0;
}
.ptab-folder {
  width: 97px;
  padding-left: 8px;
  gap: 3px;
}
.ptab-fav {
  width: 75px;
  padding-left: 8px;
  gap: 6px;
}
.panel-tools {
  height: 28px;
  display: flex;
  align-items: center;
  padding-left: 28px;
}
.tools-title {
  width: 103px;
  color: #39424b;
}
.tool-hammer, .tool-list, .tool-eye { display: flex; }
.tool-caret { margin-left: 7px; }
.tool-list { margin-left: 10px; }
.tool-list + .tool-caret { margin-left: 8px; }
.tool-eye { margin-left: 13px; }

.table {
  flex: 1;
  min-height: 0;
  margin: 0 6px 0 8px;
  background: #fff;
  display: flex;
  flex-direction: column;
}
.thead {
  display: flex;
  height: 24px;
  flex-shrink: 0;
  border-bottom: 1px solid #ececec;
  color: #333d46;
  box-sizing: border-box;
  letter-spacing: -0.5px;
}
.c-tree {
  width: 116px;
  border-right: 1px solid #ddd;
  flex-shrink: 0;
}
.c-desc {
  width: 65px;
  padding-left: 6px;
  box-sizing: border-box;
  border-right: 1px solid #ddd;
  line-height: 27px;
  flex-shrink: 0;
  white-space: nowrap;
}
.c-pro {
  padding-left: 6px;
  line-height: 27px;
  white-space: nowrap;
}
.tbody {
  flex: 1;
  display: flex;
  min-height: 0;
}
.tree-col {
  width: 116px;
  flex-shrink: 0;
  border-right: 1px solid #e6e6e6;
  overflow: hidden;
}
.row {
  height: 24px;
  display: flex;
  align-items: center;
  white-space: nowrap;
  color: #47525d;
}
.row.dis { color: #bcbcbc; }
.root {
  padding-left: 5px;
  gap: 5px;
  color: #3c4650;
}
.arrow {
  width: 0;
  height: 0;
  margin-left: 10px;
  border-top: 4.5px solid transparent;
  border-bottom: 4.5px solid transparent;
  border-left: 7px solid #888;
  flex-shrink: 0;
}
.arrow.hidden { visibility: hidden; }
.row-icon {
  width: 17px;
  margin-left: 7px;
  flex-shrink: 0;
  display: flex;
  justify-content: center;
  align-items: center;
}
.row-text { margin-left: 4px; }
.row-text.tight { letter-spacing: -0.85px; }
.data-col { flex: 1; min-width: 0; }
.data-row {
  height: 24px;
  display: flex;
  align-items: center;
  white-space: nowrap;
}
.d-desc { width: 66px; padding-left: 2px; box-sizing: border-box; }
.d-pro { padding-left: 1px; }

/* ── Graphics area ──────────────────────────────── */
.canvas {
  position: relative;
  flex: 1;
  min-width: 0;
  background: #e9ebef;
}
.part {
  position: absolute;
  inset: 0;
}
.float-bar {
  position: absolute;
  left: 6px;
  top: 184px;
  width: 37px;
  height: 428px;
  box-sizing: border-box;
  padding: 4px 0;
  display: flex;
  flex-direction: column;
  align-items: center;
  justify-content: space-between;
  background: #f4f4f4;
  border: 1px solid #a9a9a9;
}
.float-btn {
  display: flex;
  width: 24px;
  height: 24px;
}
.float-on {
  width: 26px;
  height: 26px;
  align-items: center;
  justify-content: center;
  background: #dcdcdc;
  border: 1px solid #a9a9a9;
}
.forum {
  position: absolute;
  right: 0;
  bottom: 0;
  width: 211px;
  height: 66px;
  background: rgba(236, 238, 241, 0.72);
}
.forum-logo {
  position: absolute;
  left: 2px;
  top: 0;
}
.forum-name {
  position: absolute;
  left: 70px;
  top: 0;
  font-size: 30px;
  font-weight: 700;
  line-height: 38px;
  letter-spacing: -0.5px;
  color: #8fd0a9;
  white-space: nowrap;
}
.forum-url {
  position: absolute;
  left: 58px;
  top: 41px;
  font-size: 16.5px;
  line-height: 18px;
  color: #c9dfe0;
  white-space: nowrap;
}

.stamp {
  position: absolute;
  left: 146px;
  top: 131px;
  width: 104px;
  font-size: 20px;
  line-height: 28px;
  font-weight: 700;
  letter-spacing: 6px;
  color: rgba(190, 100, 100, 0.28);
  white-space: nowrap;
  pointer-events: none;
}
.stamp small {
  display: block;
  margin: -2px 0 0 17px;
  font-size: 8px;
  line-height: 10px;
  letter-spacing: 1.2px;
  font-weight: 400;
  color: rgba(150, 110, 110, 0.5);
}
.cursor {
  position: absolute;
  left: 182px;
  top: 238px;
}
</style>
